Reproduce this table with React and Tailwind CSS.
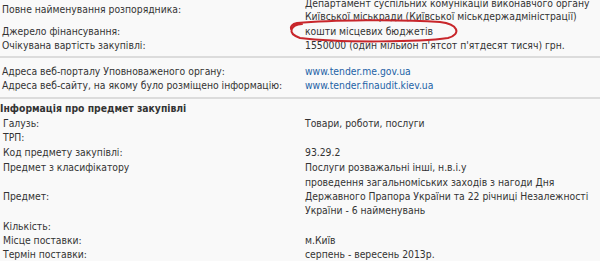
export default function App() {
  const Row = ({ label, children, h = "h-[15px]", labelCls = "" }) => (
    <div className={`flex items-center ${h}`}>
      <div className={`w-[305px] shrink-0 pl-[2px] ${labelCls}`}>{label}</div>
      <div className="flex-1">{children}</div>
    </div>
  );
  const Sep = ({ cls }) => (
    <div className={cls}>
      <div className="h-[2px] bg-[#dcdcdc]" />
    </div>
  );
  return (
    <div className="relative w-[600px] h-[261px] overflow-hidden bg-[#f9f9f9] text-[#333] text-[10.3px] leading-[14px] whitespace-nowrap font-['DejaVu_Sans_Condensed','DejaVu_Sans',sans-serif]">
      <div className="mt-[-5px] flex flex-col">
        <div className="flex items-center h-[28px]">
          <div className="w-[305px] shrink-0 pl-[2px]">Повне найменування розпорядника:</div>
          <div className="flex-1 leading-[13px] pt-px">
            Департамент суспільних комунікацій виконавчого органу
            <br />
            Київської міськради (Київської міськдержадміністрації)
          </div>
        </div>
        <Row label="Джерело фінансування:">кошти місцевих бюджетів</Row>
        <Row label="Очікувана вартість закупівлі:" h="h-[14px]">
          1550000 (один мільйон п'ятсот п'ятдесят тисяч) грн.
        </Row>
        <Sep cls="pt-[4px] pb-[6px]" />
        <Row label="Адреса веб-порталу Уповноваженого органу:" h="h-[14px]">
          <span className="text-[#2362a6]">www.tender.me.gov.ua</span>
        </Row>
        <Row label="Адреса веб-сайту, на якому було розміщено інформацію:" h="h-[14px]">
          <span className="text-[#2362a6]">www.tender.finaudit.kiev.ua</span>
        </Row>
        <Sep cls="pt-[5px] pb-[2px]" />
        <div className="h-[14px] flex items-center font-bold">Інформація про предмет закупівлі</div>
        <Row label="Галузь:" labelCls="pl-[3px]">Товари, роботи, послуги</Row>
        <Row label="ТРП:" h="h-[14px]" labelCls="pl-[3px]" />
        <Row label="Код предмету закупівлі:" labelCls="pl-[3px]">93.29.2</Row>
        <Row label="Предмет з класифікатору" labelCls="pl-[3px]">Послуги розважальні інші, н.в.і.у</Row>
        <div className="flex items-center h-[44px]">
          <div className="w-[305px] shrink-0 pl-[3px]">Предмет:</div>
          <div className="flex-1">
            проведення загальноміських заходів з нагоди Дня
            <br />
            Державного Прапора України та 22 річниці Незалежності
            <br />
            України - 6 найменувань
          </div>
        </div>
        <Row label="Кількість:" labelCls="pl-[3px]" />
        <Row label="Місце поставки:" h="h-[14px]" labelCls="pl-[3px]">м.Київ</Row>
        <Row label="Термін поставки:" h="h-[14px]" labelCls="pl-[3px]">серпень - вересень 2013р.</Row>
      </div>
      <svg className="absolute left-0 top-0 pointer-events-none" width="600" height="261" viewBox="0 0 600 261">
        <path
          d="M 302 24 C 291 25, 286 33, 300 38 C 340 43, 420 42, 448 38 C 462 34, 458 24, 440 22 C 400 19, 330 20, 297 23 C 292 24, 290 27, 291 29"
          fill="none"
          stroke="#c8262b"
          strokeWidth="2"
          strokeLinecap="round"
        />
      </svg>
    </div>
  );
}
